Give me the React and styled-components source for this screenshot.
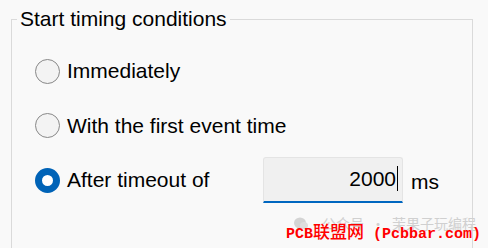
import styled, { createGlobalStyle } from "styled-components";

const Global = createGlobalStyle`
	html, body {
		margin: 0;
		padding: 0;
		background: #f9f9f9;
		overflow: hidden;
	}
	body {
		font-family: "Liberation Sans", Arial, sans-serif;
		color: #000;
	}
`;

const Page = styled.div`
	position: relative;
	width: 488px;
	height: 248px;
	padding: 7px 0 0 11px;
	box-sizing: border-box;
	overflow: hidden;
`;

const Group = styled.fieldset`
	margin: 0;
	padding: 13px 0 0 23px;
	width: 462px;
	height: 260px;
	box-sizing: border-box;
	border: 1px solid #dadada;
	min-inline-size: 0;
`;

const Legend = styled.legend`
	margin-left: -18px;
	padding: 0 3px;
	font-size: 21px;
	line-height: 24px;
`;

const Options = styled.div`
	display: flex;
	flex-direction: column;
`;

const Row = styled.label`
	display: flex;
	align-items: center;
	height: 54.5px;
	font-size: 21px;
`;

const Radio = styled.span`
	flex: none;
	width: 25px;
	height: 25px;
	box-sizing: border-box;
	border-radius: 50%;
	margin-right: 7px;
	border: ${(p) => (p.$checked ? "7.5px solid #0063b7" : "1.5px solid #888888")};
	background: ${(p) => (p.$checked ? "#ffffff" : "#f3f3f3")};
`;

const Text = styled.span`
	width: ${(p) => p.$width || "auto"};
`;

const Field = styled.div`
	display: flex;
	align-items: center;
	justify-content: flex-end;
	width: 140px;
	height: 46px;
	box-sizing: border-box;
	padding: 0 4px 2px 0;
	background: #f0f0f0;
	border: 1px solid #e4e4e4;
	border-bottom: 2px solid #0067c0;
	border-radius: 3px 3px 0 0;
	font-size: 21px;
`;

const Caret = styled.span`
	display: inline-block;
	width: 1px;
	height: 25px;
	background: #000;
	margin-left: 1px;
`;

const Unit = styled.span`
	margin-left: 8px;
	padding-top: 4px;
`;

const Watermark = styled.div`
	position: absolute;
	left: 286px;
	top: 213px;
	width: 202px;
	height: 35px;
`;

const Faded = styled.div`
	position: absolute;
	left: 8px;
	top: 0;
	display: flex;
	align-items: center;
	gap: 14px;
	font-family: "Noto Sans CJK SC", sans-serif;
	font-size: 14px;
	line-height: 20px;
	color: #d0d0d0;
	white-space: nowrap;
`;

const Dot = styled.span`
	margin: 0 7px;
`;

const Red = styled.div`
	position: absolute;
	left: 0;
	top: 7px;
	font-family: "Liberation Mono", "Noto Sans CJK SC", monospace;
	font-size: 15px;
	font-weight: bold;
	line-height: 22px;
	color: #ff0000;
	white-space: nowrap;
`;

const Han = styled.span`
	font-family: "Noto Sans CJK SC", sans-serif;
	font-size: 17px;
	font-weight: 500;
`;

const App = () => (
	<Page>
		<Global />
		<Group>
			<Legend>Start timing conditions</Legend>
			<Options>
				<Row>
					<Radio />
					<Text>Immediately</Text>
				</Row>
				<Row>
					<Radio />
					<Text>With the first event time</Text>
				</Row>
				<Row>
					<Radio $checked />
					<Text $width="196px">After timeout of</Text>
					<Field>
						2000
						<Caret />
					</Field>
					<Unit>ms</Unit>
				</Row>
			</Options>
		</Group>
		<Watermark>
			<Faded>
				<svg width="14" height="13" viewBox="0 0 14 13">
					<ellipse cx="6" cy="6" rx="6" ry="5.5" fill="#d4d4d4" />
					<ellipse cx="10" cy="8.5" rx="4" ry="3.5" fill="#dedede" />
				</svg>
				<span>
					公众号<Dot>·</Dot>茉果子玩编程
				</span>
			</Faded>
			<Red>
				PCB<Han>联盟网</Han> (Pcbbar.com)
			</Red>
		</Watermark>
	</Page>
);

export default App;
